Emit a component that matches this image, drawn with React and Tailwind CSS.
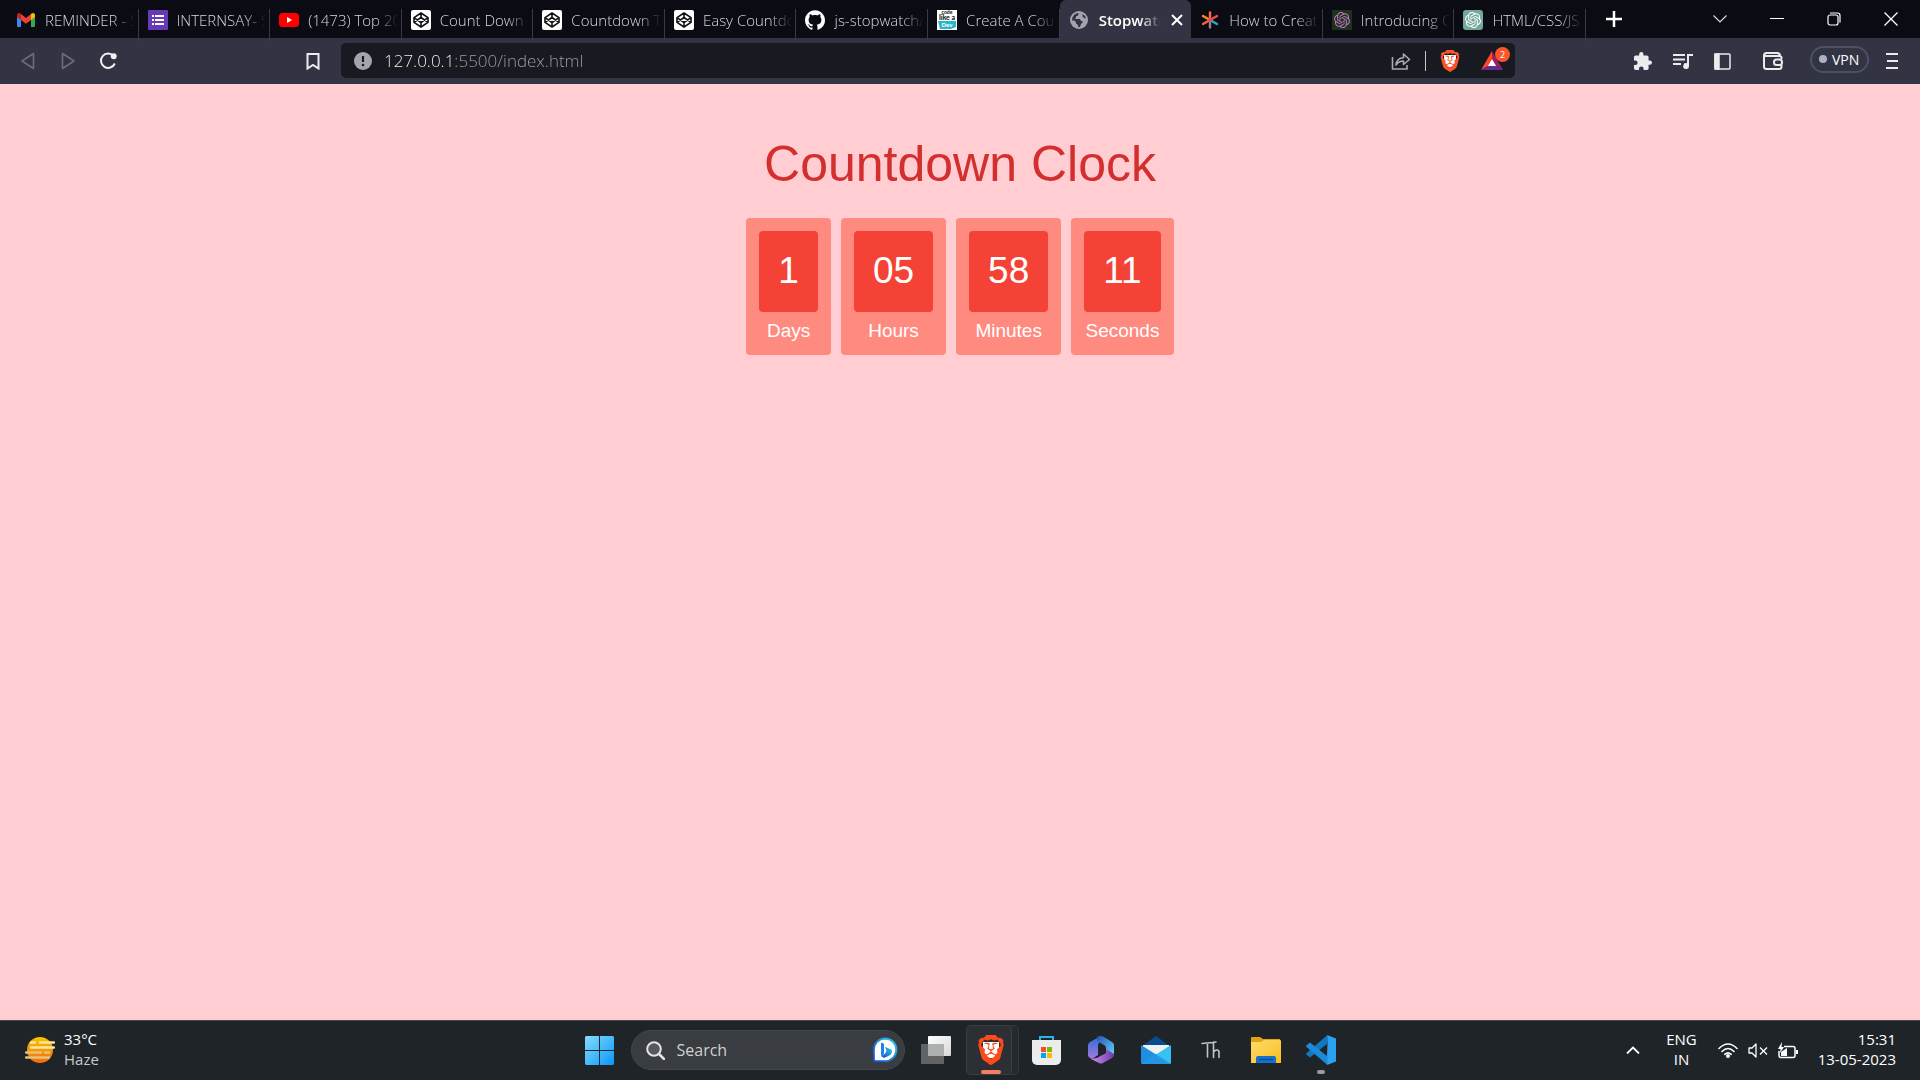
import React from "react";
import { SiGithub, SiOpenai, SiBrave } from "react-icons/si";

function Gmail() {
  return (
    <svg viewBox="0 0 18 14" className="h-[14px] w-[18px]">
      <path fill="#4285f4" d="M0 2.5v10.2c0 .7.6 1.3 1.3 1.3H4V6z" />
      <path fill="#34a853" d="M18 2.5v10.2c0 .7-.6 1.3-1.3 1.3H14V6z" />
      <path fill="#fbbc04" d="M14 1v6l4-3V2c0-1.800-2-2.600-3.400-1.500z" />
      <path fill="#c5221f" d="M4 1v6L0 4V2C0 .2 2-.6 3.400.500z" />
      <path fill="#ea4335" d="M4 1l5 3.900L14 1v6l-5 3.800L4 7z" />
    </svg>
  );
}

function Forms() {
  return (
    <svg viewBox="0 0 20 20" className="size-5">
      <rect width="20" height="20" rx="1" fill="#673ab7" />
      <g fill="#fff">
        <rect x="4" y="5" width="2" height="2" />
        <rect x="4" y="9" width="2" height="2" />
        <rect x="4" y="13" width="2" height="2" />
        <rect x="7" y="5" width="9" height="2" />
        <rect x="7" y="9" width="9" height="2" />
        <rect x="7" y="13" width="9" height="2" />
      </g>
    </svg>
  );
}

function Youtube() {
  return (
    <svg viewBox="0 0 20 14" className="h-[14px] w-5">
      <rect width="20" height="14" rx="3.500" fill="#f00" />
      <path d="M8 4l5.200 3L8 10z" fill="#fff" />
    </svg>
  );
}

function Codepen() {
  return (
    <svg viewBox="0 0 20 20" className="size-5" fill="none" stroke="#111" strokeWidth="1.600" strokeLinejoin="round">
      <rect width="20" height="20" rx="2" fill="#fff" stroke="none" />
      <path d="M10 3l7 4.700v4.600L10 17l-7-4.700V7.700z" />
      <path d="M10 3v4.500M10 12.500V17M3 7.700l7 4.800 7-4.800M3 12.300l7-4.800 7 4.800" />
    </svg>
  );
}

function CodeDev() {
  return (
    <svg viewBox="0 0 20 20" className="size-5" fontFamily="Lato, sans-serif" fontWeight="900">
      <rect width="20" height="20" fill="#fff" />
      <text x="10" y="4" fontSize="5" textAnchor="middle" fill="#222">code</text>
      <text x="10" y="10" fontSize="7" textAnchor="middle" fill="#222">like a</text>
      <path d="M1 11h18v6l-5 2H3z" fill="#2bb5c9" />
      <text x="10" y="17" fontSize="6" textAnchor="middle" fill="#fff">Dev</text>
    </svg>
  );
}

function Globe() {
  return (
    <svg viewBox="0 0 18 18" className="size-[18px]">
      <circle cx="9" cy="9" r="9" fill="#a2a5ae" />
      <path
        d="M2 9.500C2 5.500 4.500 2.500 8.500 2v1.500l-1 1.500H6v2L4.500 8h5.500l1 2h1.500v1.500L11 13l-1 3c-1 .2-1.500.1-2 0v-2l-2-1.500V11l-2-1.500zM10.500 2.500l2 1v2l1.500 1.500 2 .5c-.5-2.500-2.500-4.500-5.500-5z"
        fill="#323443"
      />
    </svg>
  );
}

function Asterisk() {
  return (
    <svg viewBox="0 0 20 20" className="size-5" strokeWidth="2.400" strokeLinecap="round">
      <path d="M10 10V2.500" stroke="#ff6a3d" />
      <path d="M10 10L3 6" stroke="#ff8a1e" />
      <path d="M10 10l-7 4" stroke="#ff6430" />
      <path d="M10 10l7-4" stroke="#f0503c" />
      <path d="M10 10l7 4" stroke="#35a9b5" />
      <path d="M10 10v7.500" stroke="#8c8496" />
      <circle cx="10" cy="10" r="2" fill="#e04b62" />
    </svg>
  );
}

function Intro() {
  return (
    <span className="flex size-5 items-center justify-center bg-[#1c3318] text-[#c274c8]">
      <SiOpenai size={16} />
    </span>
  );
}

function Gpt() {
  return (
    <span className="flex size-5 items-center justify-center rounded-[3px] bg-[#74aa9c] text-white">
      <SiOpenai size={16} />
    </span>
  );
}

const tabs = [
  { icon: <Gmail />, title: "REMINDER - S" },
  { icon: <Forms />, title: "INTERNSAY- S" },
  { icon: <Youtube />, title: "(1473) Top 20" },
  { icon: <Codepen />, title: "Count Down" },
  { icon: <Codepen />, title: "Countdown T" },
  { icon: <Codepen />, title: "Easy Countdo" },
  { icon: <SiGithub size={20} color="#fff" />, title: "js-stopwatch/" },
  { icon: <CodeDev />, title: "Create A Cou" },
  { icon: <Globe />, title: "Stopwatch", active: true },
  { icon: <Asterisk />, title: "How to Creat" },
  { icon: <Intro />, title: "Introducing C" },
  { icon: <Gpt />, title: "HTML/CSS/JS" },
];

function Tab({ icon, title, active }) {
  if (active) {
    return (
      <div className="flex min-w-0 items-center rounded-t-md bg-[#323443] pl-[9px] pr-[6px]">
        <button className="flex min-w-0 flex-1 items-center gap-[10px]">
          <span className="flex w-5 shrink-0 justify-center">{icon}</span>
          <span className="flex-1 overflow-hidden whitespace-nowrap text-left font-semibold text-white [mask-image:linear-gradient(to_right,#000_65%,transparent)]">
            {title}
          </span>
        </button>
        <button aria-label="Close tab" className="ml-2 flex w-4 justify-center">
          <svg viewBox="0 0 12 12" className="size-3" stroke="#fff" strokeWidth="2">
            <path d="M1 1l10 10M11 1L1 11" />
          </svg>
        </button>
      </div>
    );
  }
  return (
    <button className="mt-[9px] flex min-w-0 items-center gap-[9px] border-r border-[#3a3a40] pb-[9px] pl-[9px] pr-[3px]">
      <span className="flex w-5 shrink-0 justify-center">{icon}</span>
      <span className="flex-1 overflow-hidden whitespace-nowrap text-left [mask-image:linear-gradient(to_right,#000_75%,transparent)]">
        {title}
      </span>
    </button>
  );
}

function TabStrip() {
  return (
    <div className="flex h-[38px] bg-[#0b0b14] text-[15px] font-light text-[#d8d8de]">
      <div className="ml-[7px] grid max-w-[1579px] flex-1 grid-cols-12">
        {tabs.map((t, i) => (
          <Tab key={i} {...t} />
        ))}
      </div>
      <button aria-label="New tab" className="ml-5 flex w-4 items-center">
        <svg viewBox="0 0 16 16" className="size-4" stroke="#fff" strokeWidth="2.500">
          <path d="M8 0v16M0 8h16" />
        </svg>
      </button>
      <div className="ml-auto flex pr-px *:flex *:w-[57px] *:items-center *:justify-center">
        <button aria-label="Search tabs">
          <svg viewBox="0 0 14 8" className="h-2 w-[14px]" fill="none" stroke="#ddd" strokeWidth="1.200">
            <path d="M.5.500L7 7l6.500-6.500" />
          </svg>
        </button>
        <button aria-label="Minimize">
          <svg viewBox="0 0 14 2" className="h-[2px] w-[14px]" fill="#fff">
            <rect width="14" height="1" />
          </svg>
        </button>
        <button aria-label="Restore">
          <svg viewBox="0 0 14 14" className="size-[14px]" fill="none" stroke="#fff" strokeWidth="1.200">
            <rect x="1" y="3" width="10" height="10" rx="2" />
            <path d="M3 1h7.500c1.500 0 2.500 1 2.500 2.500V10.500" />
          </svg>
        </button>
        <button aria-label="Close">
          <svg viewBox="0 0 14 14" className="size-[14px]" stroke="#fff" strokeWidth="1.300">
            <path d="M.5.500l13 13M13.500.500l-13 13" />
          </svg>
        </button>
      </div>
    </div>
  );
}

function Toolbar() {
  return (
    <div className="flex h-[46px] items-center bg-[#323443]">
      <button aria-label="Back" className="ml-[21px]">
        <svg viewBox="0 0 14 18" className="h-[18px] w-[14px]" fill="none" stroke="#6b6d7b" strokeWidth="1.600" strokeLinejoin="round">
          <path d="M12.500 1.500v15L1 9z" />
        </svg>
      </button>
      <button aria-label="Forward" className="ml-[26px]">
        <svg viewBox="0 0 14 18" className="h-[18px] w-[14px]" fill="none" stroke="#6b6d7b" strokeWidth="1.600" strokeLinejoin="round">
          <path d="M1.500 1.500v15L13 9z" />
        </svg>
      </button>
      <button aria-label="Reload" className="ml-6">
        <svg viewBox="0 0 18 18" className="size-[18px]" fill="none" stroke="#f0f0f2" strokeWidth="2">
          <path d="M14.500 3.800A7.200 7.200 0 1 0 15.800 11.500" />
          <circle cx="14.700" cy="4.300" r="2" fill="#f0f0f2" />
        </svg>
      </button>
      <button aria-label="Bookmark" className="ml-[189px]">
        <svg viewBox="0 0 14 17" className="h-[17px] w-[14px]" fill="none" stroke="#ececee" strokeWidth="2">
          <path d="M1.500 1h11v14.500L7 12l-5.500 3.500z" />
        </svg>
      </button>
      <div className="mb-px ml-[21px] flex h-[35px] min-w-0 max-w-[1174px] flex-1 items-center rounded-[5px] bg-[#171a21] pl-[13px] pr-[5px]">
        <svg viewBox="0 0 18 18" className="size-[18px] shrink-0">
          <circle cx="9" cy="9" r="9" fill="#a2a5ae" />
          <path d="M9 4v6" stroke="#171a21" strokeWidth="2.200" />
          <circle cx="9" cy="13" r="1.300" fill="#171a21" />
        </svg>
        <label className="ml-3 flex min-w-0 flex-1 items-center text-[17px] font-light">
          <span className="sr-only">Address</span>
          <input
            defaultValue="127.0.0.1:5500/index.html"
            className="w-full bg-[linear-gradient(to_right,#fff_71px,#a0a2aa_71px)] bg-clip-text text-transparent outline-none"
          />
        </label>
        <button aria-label="Share">
          <svg viewBox="0 0 20 18" className="h-[18px] w-5" fill="none" stroke="#a9abb2" strokeWidth="1.600">
            <path d="M1.500 5v12h14.500v-4" />
            <path d="M5 13c.5-5 3-7 7.500-7.200V2l6 5.500-6 5V9C9 9 7 10 5 13z" strokeLinejoin="round" />
          </svg>
        </button>
        <span className="ml-[14px] h-5 w-px bg-[#c4c6cc]" />
        <button aria-label="Brave Shields" className="relative ml-[13px] flex h-6 w-[22px] items-center justify-center">
          <span className="absolute size-3 bg-white" />
          <SiBrave size={24} color="#fb542b" className="relative" />
        </button>
        <button aria-label="Rewards" className="relative ml-5 h-[27px] w-[29px]">
          <svg viewBox="0 0 22 19" className="absolute bottom-1 left-0 h-[19px] w-[22px]">
            <path d="M11 0L0 19l7-4 4-7z" fill="#ff4724" />
            <path d="M11 0l11 19-7-4-4-7z" fill="#9e1f63" />
            <path d="M0 19h22l-7-4H7z" fill="#662d91" />
            <path d="M11 8l4.200 7H6.800z" fill="#fff" />
          </svg>
          <span className="absolute right-0 top-0 flex size-[15px] items-center justify-center rounded-full bg-[#fb542b] text-[9px] text-white">
            2
          </span>
        </button>
      </div>
      <div className="ml-auto flex items-center text-[#ececee]">
        <button aria-label="Extensions" className="flex w-[18px]">
          <svg viewBox="2 1 21 21" className="size-[18px]" fill="currentColor">
            <path d="M20.500 11H19V7c0-1.100-.9-2-2-2h-4V3.500a2.500 2.500 0 0 0-5 0V5H4c-1.100 0-2 .9-2 2v3.800h1.500a2.700 2.700 0 0 1 0 5.400H2V20c0 1.100.9 2 2 2h3.800v-1.500a2.700 2.700 0 0 1 5.400 0V22H17c1.100 0 2-.9 2-2v-4h1.500a2.500 2.500 0 0 0 0-5z" />
          </svg>
        </button>
        <button aria-label="Media" className="ml-[21px]">
          <svg viewBox="0 0 20 17" className="h-[17px] w-5" fill="currentColor">
            <path d="M0 1h12v2H0zM0 5.500h12v2H0zM0 10h8v2H0zM14 1h6v2h-4v10a2.900 2.900 0 1 1-2-2.700z" />
          </svg>
        </button>
        <button aria-label="Sidebar" className="ml-[21px]">
          <svg viewBox="0 0 17 17" className="size-[17px]" fill="none" stroke="currentColor" strokeWidth="1.500">
            <rect x="1" y="1" width="15" height="15" rx="1" />
            <rect x="1" y="1" width="4" height="15" fill="currentColor" />
          </svg>
        </button>
        <button aria-label="Wallet" className="ml-8">
          <svg viewBox="0 0 20 18" className="h-[18px] w-5" fill="none" stroke="currentColor" strokeWidth="2">
            <path d="M18.500 7V6a2 2 0 0 0-2-2H3a2 2 0 0 1-1.800-1.500M18.500 13v1.500a2.500 2.500 0 0 1-2.500 2.500H3.500A2.500 2.500 0 0 1 1 14.500v-11C1 2 2 1 3.500 1H14a3 3 0 0 1 3 3" />
            <rect x="11" y="7.500" width="8" height="5.500" rx="2.500" />
          </svg>
        </button>
        <button className="mb-1 ml-[27px] flex h-[27px] w-[59px] items-center gap-[5px] rounded-full border-2 border-[#4d5065] pl-[7px] text-[14px] text-white">
          <span className="size-2 rounded-full bg-[#adb0c4]" />
          VPN
        </button>
        <button aria-label="Menu" className="ml-[17px] mr-[22px]">
          <svg viewBox="0 0 12 16" className="h-4 w-3" fill="currentColor">
            <path d="M0 0h12v2H0zM1 7h11v2H1zM0 14h12v2H0z" />
          </svg>
        </button>
      </div>
    </div>
  );
}

const units = [
  ["1", "Days"],
  ["05", "Hours"],
  ["58", "Minutes"],
  ["11", "Seconds"],
];

function Countdown() {
  return (
    <main className="flex flex-1 flex-col items-center bg-[#ffcdd2] pt-[51px] font-['Liberation_Sans',Arial,sans-serif]">
      <h1 className="text-[50px] leading-[58px] text-[#d32f2f]">Countdown Clock</h1>
      <div className="mt-[25px] flex gap-[10px] text-white">
        {units.map(([value, label]) => (
          <div key={label} className="flex flex-col items-center rounded bg-[#ff8a80] px-[13px] pb-3 pt-[13px]">
            <span className="rounded bg-[#f44336] px-[19px] pb-5 pt-[18px] text-[37px] leading-[43px]">{value}</span>
            <span className="mt-[6px] text-[19px] leading-[25px]">{label}</span>
          </div>
        ))}
      </div>
    </main>
  );
}

function AppCell({ label, children }) {
  return (
    <button aria-label={label} className="relative flex w-[55px] items-center justify-center">
      {children}
    </button>
  );
}

function Taskbar() {
  return (
    <footer className="grid h-[60px] grid-cols-[1fr_auto_1fr] border-t border-[#45484c] bg-[#1f2429] pb-px text-[15px] leading-5 text-white">
      <button className="flex items-center gap-[9px] justify-self-start pl-[25px] text-left">
        <svg viewBox="0 0 30 26" className="h-[26px] w-[30px]">
          <defs>
            <linearGradient id="sun" x1="0" y1="0" x2="0" y2="1">
              <stop offset="0" stopColor="#fcc400" />
              <stop offset="1" stopColor="#f06a10" />
            </linearGradient>
          </defs>
          <circle cx="15" cy="13" r="13" fill="url(#sun)" />
          <g strokeWidth="2.500" strokeLinecap="round">
            <path d="M6 5.500h4M15 5.500h14M6 10.500h23" stroke="#ffe79a" />
            <path d="M1 15.500h15M20 15.500h4M1 20.500h23" stroke="#e6c17a" />
          </g>
        </svg>
        <span className="pb-[3px]">
          <span className="block">33°C</span>
          <span className="block text-[#c8c9ca]">Haze</span>
        </span>
      </button>

      <div className="flex">
        <AppCell label="Start">
          <svg viewBox="0 0 29 29" className="size-[29px]">
            <defs>
              <linearGradient id="win" x1="0" y1="0" x2="29" y2="29" gradientUnits="userSpaceOnUse">
                <stop offset="0" stopColor="#84defc" />
                <stop offset="1" stopColor="#0a96f8" />
              </linearGradient>
            </defs>
            <path fill="url(#win)" d="M1 0h13v14H0V1zM15 0h13l1 1v13H15zM0 15h14v14H1l-1-1zM15 15h14v13l-1 1H15z" />
          </svg>
        </AppCell>
        <label className="mx-1 my-auto flex h-10 w-[274px] items-center rounded-full border border-[#42464a] bg-[#393c41] pl-[14px] pr-[6px]">
          <svg viewBox="0 0 19 19" className="size-[19px] shrink-0" fill="none" stroke="#e4e4e4" strokeWidth="2" strokeLinecap="round">
            <circle cx="8" cy="8" r="6.800" fill="#55585c" />
            <path d="M13 13l5 5" strokeWidth="2.500" />
          </svg>
          <span className="sr-only">Search</span>
          <input placeholder="Search" className="ml-3 min-w-0 flex-1 bg-transparent text-[16px] outline-none placeholder:text-[#cfd0d2]" />
          <svg viewBox="0 0 26 26" className="size-[26px] shrink-0">
            <defs>
              <linearGradient id="bing" x1="1" y1="0" x2="0" y2="1">
                <stop offset="0" stopColor="#2ccbe8" />
                <stop offset="1" stopColor="#1648c8" />
              </linearGradient>
            </defs>
            <path d="M13 1.500A11.300 11.300 0 1 1 13 24.200H1.800V13A11.300 11.300 0 0 1 13 1.500z" fill="#fff" stroke="url(#bing)" strokeWidth="2" />
            <path d="M9 5.500l3 1.200V17l-3 2z" fill="#2480e8" />
            <path d="M9 19l4-2.300 1.500-3-1.500-4 6.500 3c1.500 3-1 5.300-3 6.300L12 21z" fill="url(#bing)" />
          </svg>
        </label>
        <AppCell label="Task view">
          <svg viewBox="0 0 30 28" className="h-7 w-[30px]">
            <defs>
              <linearGradient id="tv" x1="0" y1="0" x2="1" y2="1">
                <stop offset="0" stopColor="#fff" />
                <stop offset="1" stopColor="#d8d8d8" />
              </linearGradient>
            </defs>
            <rect x="7" width="23" height="20" rx="1" fill="url(#tv)" />
            <rect y="8" width="23" height="20" rx="1" fill="#626364" />
            <rect x="7" y="8" width="16" height="12" fill="#aeafaf" />
          </svg>
        </AppCell>
        <AppCell label="Brave">
          <span className="absolute inset-y-1 left-2 right-0 rounded-[5px] border border-[#34383d] bg-[#262a2f]" />
          <span className="absolute inset-y-1 left-[2px] right-[7px] rounded-[5px] border border-[#3a3e43] bg-[#2c3035]" />
          <span className="absolute size-4 bg-white" />
          <SiBrave size={30} color="#fb4a1b" className="relative" />
          <span className="absolute bottom-[5px] left-[17px] h-1 w-5 rounded-full bg-[#f47d64]" />
        </AppCell>
        <AppCell label="Microsoft Store">
          <svg viewBox="0 0 29 29" className="size-[29px]">
            <path d="M8 5V1h13v4" fill="none" stroke="#28b4ee" strokeWidth="2" />
            <path d="M0 4h29v20a5 5 0 0 1-5 5H5a5 5 0 0 1-5-5z" fill="#ececec" />
            <path d="M9 11h5v5H9z" fill="#f25022" />
            <path d="M15 11h5v5h-5z" fill="#7fba00" />
            <path d="M9 17h5v5H9z" fill="#00a4ef" />
            <path d="M15 17h5v5h-5z" fill="#ffb900" />
          </svg>
        </AppCell>
        <AppCell label="Microsoft 365">
          <svg viewBox="0 0 28 28" className="size-7">
            <defs>
              <linearGradient id="m1" x1="0" y1="0" x2="0" y2="1">
                <stop offset="0" stopColor="#2b6fd4" />
                <stop offset="1" stopColor="#a478e0" />
              </linearGradient>
              <linearGradient id="m2" x1="0" y1="0" x2="1" y2="1">
                <stop offset="0" stopColor="#2a50b8" />
                <stop offset="1" stopColor="#5fd6f8" />
              </linearGradient>
              <linearGradient id="m3" x1="0" y1="0" x2="1" y2="0">
                <stop offset="0" stopColor="#d08cf0" />
                <stop offset="1" stopColor="#6e3aa8" />
              </linearGradient>
            </defs>
            <path d="M14 0L3 6Q1 7 1 9.500V19q0 2 2 3l2 1 6-4V9q0-2 3-4z" fill="url(#m1)" />
            <path d="M10 1q4-2 7 0l8 5q2 1 2 3v10l-8-1v-6q0-2-2-3l-7-4z" fill="url(#m2)" />
            <path d="M4 23l6-1 7-4q2-1 2-3v-2l8 5v1q0 2-2 3l-9 5q-2 1-4 0z" fill="url(#m3)" />
            <path d="M14 9l5 3v5l-4 2-4-2v-5z" fill="#1f2429" />
          </svg>
        </AppCell>
        <AppCell label="Mail">
          <svg viewBox="0 0 30 28" className="h-7 w-[30px]">
            <path d="M0 11L15 0l15 11z" fill="#0a4c94" />
            <path d="M2 9h26v9H2z" fill="#f0f0f0" />
            <path d="M0 9l30 19H1l-1-1z" fill="#1f8fe0" />
            <path d="M30 9v18l-1 1H1l14-9.500z" fill="#35c1f1" />
            <path d="M1 28l14-9.500L30 28z" fill="#2397e4" />
          </svg>
        </AppCell>
        <AppCell label="Thonny">
          <svg viewBox="0 0 20 20" className="size-5" fill="none" stroke="#c3c4c4" strokeWidth="1.600" strokeLinecap="round">
            <path d="M1 3.500L15 2M6.500 3v14M12.500 2v15.500M12.500 12c2-3 5.500-2.500 5.500 0v5.500" />
          </svg>
        </AppCell>
        <AppCell label="File Explorer">
          <svg viewBox="0 0 30 28" className="h-7 w-[30px]">
            <defs>
              <linearGradient id="fe" x1="0" y1="0" x2="1" y2="1">
                <stop offset="0" stopColor="#ffdc6e" />
                <stop offset="1" stopColor="#f8bd1f" />
              </linearGradient>
            </defs>
            <path d="M0 8V2q0-1 1-1h8l3 2h17v6z" fill="#e3a210" />
            <path d="M0 6h10l3-2h16q1 0 1 1v22H0z" fill="url(#fe)" />
            <path d="M5 27v-5q0-2 2-2h16q2 0 2 2v5z" fill="#1272cc" />
            <path d="M8 23.500h14" stroke="#0a4f96" strokeWidth="1.500" />
          </svg>
        </AppCell>
        <AppCell label="Visual Studio Code">
          <svg viewBox="0 0 30 30" className="size-[30px]">
            <path d="M21 0l9 3.500v23L21 30V21.500l.5-13z" fill="#2ba2f0" />
            <path d="M21.500 0v8.500L4 22.500l-3.500-2.700q-.7-1 0-1.800z" fill="#1377be" />
            <path d="M21.500 30v-8.500L4 7.500.500 10.200q-.7 1 0 1.800z" fill="#1b8bd8" />
          </svg>
          <span className="absolute bottom-[5px] left-[23px] h-1 w-2 rounded-full bg-[#9a9c9e]" />
        </AppCell>
      </div>

      <div className="flex items-center justify-self-end pr-6">
        <button aria-label="Show hidden icons">
          <svg viewBox="0 0 14 8" className="h-2 w-[14px]" fill="none" stroke="#fff" strokeWidth="1.800">
            <path d="M1 7.500l6-6 6 6" />
          </svg>
        </button>
        <button className="ml-[26px] pb-[2px] text-center">
          ENG
          <br />
          IN
        </button>
        <button aria-label="Network, volume and battery" className="ml-[21px] flex items-center gap-[10px]">
          <svg viewBox="0 0 20 15" className="h-[15px] w-5" fill="none" stroke="#fff" strokeWidth="1.600" strokeLinecap="round">
            <path d="M1 5.500q9-9 18 0M4 8.500q6-6 12 0M6.800 11.300q3.200-3 6.400 0" />
            <circle cx="10" cy="13" r="1.200" fill="#fff" />
          </svg>
          <svg viewBox="0 0 20 15" className="h-[15px] w-5" fill="none" stroke="#fff" strokeWidth="1.300">
            <path d="M1 5v5h3l4 4V1L4 5z" strokeLinejoin="round" />
            <path d="M12 4.500l7 7M19 4.500l-7 7" />
          </svg>
          <svg viewBox="0 0 20 17" className="h-[17px] w-5" fill="none" stroke="#fff" strokeWidth="1.500">
            <path d="M6 4.500h9q2 0 2 2v7q0 2-2 2H3q-2 0-2-2V9" />
            <path d="M3 14V10l6-4v8z" fill="#fff" stroke="none" />
            <path d="M4 0L0 7h2.500L2 11l4-6H3.500z" fill="#fff" stroke="none" />
            <path d="M19 8v4" strokeWidth="2" />
          </svg>
        </button>
        <button className="ml-5 pb-[3px] text-right">
          15:31
          <br />
          13-05-2023
        </button>
      </div>
    </footer>
  );
}

export default function App() {
  return (
    <div className="flex min-h-screen flex-col font-['Open_Sans','Noto_Sans',sans-serif]">
      <header>
        <TabStrip />
        <Toolbar />
      </header>
      <Countdown />
      <Taskbar />
    </div>
  );
}
